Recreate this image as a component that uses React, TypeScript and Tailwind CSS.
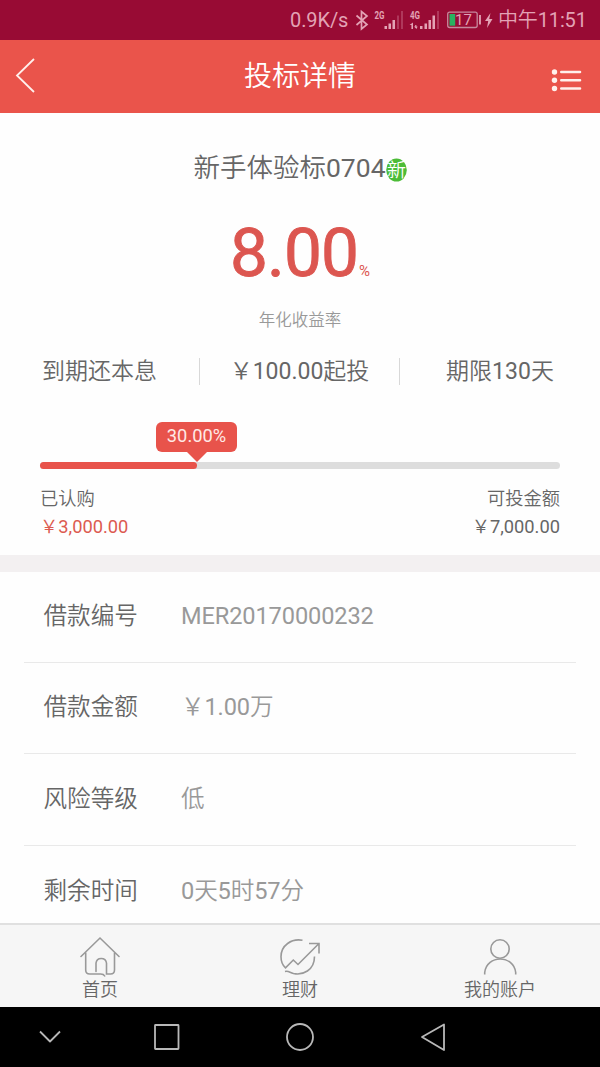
import React from "react";

function StatusBar() {
  return (
    <div className="flex h-10 shrink-0 items-center justify-end bg-[#980b34] pr-[14px] text-[20px] leading-[42px] text-[#e3a3b5]">
      <span className="w-[59px] whitespace-nowrap tracking-[-0.1px]">0.9K/s</span>
      <svg className="ml-[5px] h-6 w-[140px] shrink-0" viewBox="354 8 140 24" fill="none">
        <path d="M356.500 15.500l10.500 9-5.500 4.500V11.500l5.500 4.500-10.500 9" stroke="#e3a3b5" strokeWidth="1.700" />
        <g fill="#e3a3b5">
          <text x="374.500" y="19" fontSize="10" fontWeight="700" textLength="10" lengthAdjust="spacingAndGlyphs">2G</text>
          <path d="M384.500 26h2.500v3h-2.500zM388.500 23.500h2.500v5.500h-2.500zM392.500 20h2.500v9h-2.500z" />
          <path opacity=".3" d="M397 15.500h2v13.500h-2zM401 11h2v18h-2z" />
          <text x="410" y="19" fontSize="10" fontWeight="700" textLength="10" lengthAdjust="spacingAndGlyphs">4G</text>
          <path d="M413 22.500v6.500h-1.600v-4H409.500zM416.500 29l-2.500-2.500h1.200V25h1.200v1.500h1.200zM420 26h2.500v3H420zM424.500 23.500h2.500v5.500h-2.500zM428.500 20h2.500v9h-2.500zM432.500 15.500h2.500v13.500h-2.500z" />
          <path opacity=".3" d="M437 11h2v18h-2z" />
        </g>
        <rect x="447.700" y="12.200" width="29.500" height="15.300" rx="2" stroke="#c5899c" strokeWidth="1.300" />
        <rect x="449.500" y="14" width="5.700" height="11.700" fill="#29b160" />
        <text x="455" y="25.300" fontSize="15" fill="#e3a3b5">17</text>
        <path d="M480 15v9.500" stroke="#e3a3b5" strokeWidth="1.800" />
        <path d="M490.500 13l-5.500 8h3.200l-1.200 7 5.500-9h-3.300z" fill="#e3a3b5" />
      </svg>
      <span className="ml-[4px] w-[88px] whitespace-nowrap tracking-[-0.15px]">中午11:51</span>
    </div>
  );
}

function Header() {
  return (
    <header className="grid h-[73px] shrink-0 grid-cols-[60px_1fr_60px] bg-[#ea544b] text-white">
      <svg className="h-[73px] w-[60px]" viewBox="0 40 60 73" fill="none">
        <path d="M34 59L17 75.500 34 92" stroke="#fff0ec" strokeWidth="1.800" />
      </svg>
      <h1 className="text-center text-[28px] leading-[73px]">投标详情</h1>
      <svg className="h-[73px] w-[60px]" viewBox="540 40 60 73" fill="#fff0ec">
        <circle cx="554.500" cy="72" r="2.700" />
        <circle cx="554.500" cy="80.200" r="2.700" />
        <circle cx="554.500" cy="88.500" r="2.700" />
        <path d="M561.300 72H580M561.300 80.200H580M561.300 88.500H580" stroke="#fff0ec" strokeWidth="2.600" strokeLinecap="round" />
      </svg>
    </header>
  );
}

function Summary() {
  return (
    <section className="h-[442px] shrink-0 text-[#666]">
      <div className="flex h-[110px] items-center justify-center">
        <h2 className="text-[26.500px]">新手体验标0704</h2>
        <svg className="mt-[4px] h-6 w-[21px]" viewBox="0 0 21 24">
          <ellipse cx="10.500" cy="12" rx="10.300" ry="11.500" fill="#4cbc37" />
          <text x="10.500" y="19" fontSize="19" textAnchor="middle" fill="#fff">新</text>
        </svg>
      </div>
      <div className="flex h-[63px] items-end justify-center text-[#dc5650]">
        <span className="text-[67.500px] leading-[66px] tracking-[-0.9px] [-webkit-text-stroke:0.9px_#dc5650]">8.00</span>
        <span className="ml-px text-[15px] leading-[30px]">%</span>
      </div>
      <p className="mt-[23px] text-center text-[16.500px] leading-6 text-[#999]">年化收益率</p>
      <div className="mt-[22px] grid h-[32px] grid-cols-3 items-center text-center text-[23px] leading-8">
        <span className="pr-px pt-px">到期还本息</span>
        <span className="-ml-px flex h-[27px] items-center justify-center border-x border-[#d8d8d8] pt-px">￥100.00起投</span>
        <span className="pt-px">期限130天</span>
      </div>
      <div className="mx-10 mt-[35px]">
        <div className="ml-[116px] flex w-[81px] flex-col items-center">
          <span className="h-[30px] w-full rounded-[6px] bg-[#e8534b] text-center text-[18.300px] leading-[28px] text-[#ffe9e6]">30.00%</span>
          <svg className="h-[10px] w-5" viewBox="0 0 20 10" fill="#e8534b">
            <path d="M0 0h20l-10 10z" />
          </svg>
        </div>
        <div className="h-[7px] rounded-full bg-[#ddd]">
          <div className="h-full w-[157px] rounded-full bg-[#e8534b]" />
        </div>
        <div className="mt-[16px] flex justify-between text-[18.300px] leading-[28px]">
          <div>
            <p>已认购</p>
            <p className="text-[#dc5a50]">￥3,000.00</p>
          </div>
          <div className="text-right">
            <p>可投金额</p>
            <p>￥7,000.00</p>
          </div>
        </div>
      </div>
    </section>
  );
}

const details = [
  ["借款编号", "MER20170000232"],
  ["借款金额", "￥1.00万"],
  ["风险等级", "低"],
  ["剩余时间", "0天5时57分"],
];

function Details() {
  return (
    <dl className="grid h-[351px] shrink-0 grid-rows-[91px_91px_92px_92px] overflow-hidden px-6 text-[23.600px]">
      {details.map(([label, value]) => (
        <div key={label} className="flex items-center border-b border-[#e9e9e9] pl-[19.500px]">
          <dt className="w-[137.500px] text-[#666]">{label}</dt>
          <dd className="tracking-[-0.120px] text-[#999]">{value}</dd>
        </div>
      ))}
    </dl>
  );
}

function TabBar() {
  return (
    <nav className="grid h-[84px] shrink-0 grid-cols-3 border-t-2 border-[#e0e0e0] bg-[#f6f6f6] text-center text-[18px] leading-[26px] text-[#666]">
      <div className="flex flex-col items-center pt-[10px]">
        <svg className="h-[42px] w-[44px]" viewBox="78 935 44 42" fill="none" stroke="#999" strokeWidth="1.600" strokeLinecap="round">
          <path d="M81 956.500l19-18.500 19 18.500M85.700 953v17q0 4 4 4h11q3 0 4 2M114.500 953v17q0 4-4 4h-4v-11a5.300 5.300 0 0 0-10.500 0v8.500" />
        </svg>
        <span>首页</span>
      </div>
      <div className="flex flex-col items-center pt-[10px]">
        <svg className="h-[42px] w-[44px]" viewBox="278 935 44 42" fill="none" stroke="#999" strokeWidth="1.600">
          <path d="M302.500 940.300c-11-2-21.500 5-21.500 16.500 0 4.500 1.500 8.500 4.500 11l7.800-7.800 4.700 4.500L319 943.500M309 943.500h10v10M314.500 956.500c0 14-12 19-21 17-4-1-5-3-8.500-2" />
        </svg>
        <span>理财</span>
      </div>
      <div className="flex flex-col items-center pt-[10px]">
        <svg className="h-[42px] w-[44px]" viewBox="478 935 44 42" fill="none" stroke="#999" strokeWidth="1.600">
          <circle cx="500" cy="949" r="9.200" />
          <path d="M484.700 974.500v-2c2-18 29-18 31 0v2" />
        </svg>
        <span>我的账户</span>
      </div>
    </nav>
  );
}

function SystemNav() {
  return (
    <div className="h-[60px] shrink-0 bg-black">
      <svg className="h-[60px] w-[600px]" viewBox="0 1007 600 60" fill="none" stroke="#b8b8b8" strokeWidth="1.800" strokeLinejoin="round">
        <path d="M40 1031.500l10 10 10-10" />
        <rect x="155" y="1025" width="23.500" height="24" rx=".5" />
        <circle cx="300" cy="1037" r="13" />
        <path d="M444 1024.500v25.500l-22-13z" />
      </svg>
    </div>
  );
}

export default function App() {
  return (
    <main className="flex h-[1067px] w-[600px] flex-col overflow-hidden bg-[#fefefe] font-[Roboto,'Noto_Sans_CJK_SC_DemiLight','Noto_Sans_CJK_SC',sans-serif]">
      <StatusBar />
      <Header />
      <Summary />
      <div className="h-[17px] shrink-0 bg-[#f3f0f1]" />
      <Details />
      <TabBar />
      <SystemNav />
    </main>
  );
}
